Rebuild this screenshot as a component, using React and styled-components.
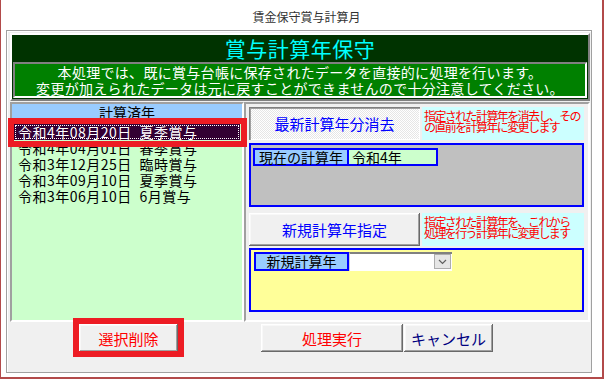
import React from "react";
import styled, { createGlobalStyle, css } from "styled-components";

const GlobalStyle = createGlobalStyle`
  html, body { margin: 0; padding: 0; background: #fff; }
  body { font-family: "Noto Sans CJK JP", "Noto Sans", sans-serif; }
  * { box-sizing: border-box; }
`;

const Window = styled.div`
  width: 604px;
  height: 379px;
  border-left: 1px solid #b24a4a;
  border-right: 2px solid #b24a4a;
  border-bottom: 2px solid #b24a4a;
  background: #fff;
  display: flex;
  flex-direction: column;
`;

const TitleBar = styled.div`
  height: 30px;
  padding: 3px 0 0 10px;
  display: flex;
  align-items: center;
  justify-content: center;
  font-size: 12px;
  color: #333;
`;

const Frame = styled.div`
  margin: 0 10px 4px 5px;
  height: 343px;
  border: 1px solid #a0a0a0;
  box-shadow: inset 1px 1px #fff;
  background: #f0f0f0;
  padding: 2px 1px 0 3px;
  display: flex;
  flex-direction: column;
`;

const Header = styled.div`
  border: 2px solid;
  border-color: #fff #808080 #808080 #fff;
  background: #003300;
  display: flex;
  flex-direction: column;
`;

const HeaderTitle = styled.div`
  height: 27px;
  line-height: 27px;
  text-align: center;
  color: #00ffff;
  font-size: 21px;
  letter-spacing: 0.5px;
`;

const Warning = styled.div`
  margin: 0 1px 1px 1px;
  height: 36px;
  border: 2px solid;
  border-color: #808080 #fff #fff #808080;
  background: #008000;
  color: #fff;
  font-size: 14px;
  line-height: 16px;
  letter-spacing: 0.3px;
  text-align: center;
  white-space: nowrap;
`;

const Body = styled.div`
  margin-top: 1px;
  height: 220px;
  display: grid;
  grid-template-columns: 234px 1fr;
`;

const Sunken = css`
  border: 2px solid;
  border-color: #a0a0a0 #fff #fff #a0a0a0;
`;

const LeftPanel = styled.div`
  ${Sunken};
  background: #ccffcc;
  display: flex;
  flex-direction: column;
`;

const ListHeader = styled.div`
  height: 16px;
  line-height: 16px;
  background: #99ccff;
  text-align: center;
  font-size: 14px;
  color: #000;
`;

const List = styled.div`
  padding: 4px 0 0 0;
  display: flex;
  flex-direction: column;
`;

const Row = styled.div`
  height: 16px;
  line-height: 16px;
  margin: 0 2px 0 2px;
  padding-left: 4px;
  font-size: 14px;
  letter-spacing: 0.5px;
  color: #000;
  word-spacing: 4px;
  white-space: nowrap;
  ${(p) =>
    p.$selected &&
    css`
      position: relative;
      background: #330033;
      color: #fff;
      outline: 1px dotted #fff;
      outline-offset: -2px;
      &::after {
        content: "";
        position: absolute;
        top: -6px;
        left: -6px;
        right: -7px;
        bottom: -7px;
        border: 6px solid #ed1c24;
        pointer-events: none;
      }
    `}
`;

const RightPanel = styled.div`
  ${Sunken};
  background: #f0f0f0;
  padding: 3px 4px 0 3px;
  display: flex;
  flex-direction: column;
`;

const ActionRow = styled.div`
  display: flex;
  gap: 2px;
  height: 33px;
  margin-top: ${(p) => p.$top || 0}px;
`;

const raised = css`
  background: #f0f0f0;
  box-shadow: inset -1px -1px #696969, inset 1px 1px #fff,
    inset -2px -2px #a0a0a0, inset 2px 2px #f8f8f8;
`;

const pressed = css`
  background: repeating-conic-gradient(#ffffff 0 25%, #e6e6e6 0 50%) 0 0 / 2px 2px;
  box-shadow: inset 1px 1px #808080, inset 2px 2px #a0a0a0,
    inset -1px -1px #fff;
`;

const BigButton = styled.div`
  width: 171px;
  height: 33px;
  display: flex;
  align-items: center;
  justify-content: center;
  font-size: 15px;
  color: #0000ff;
  ${(p) => (p.$pressed ? pressed : raised)};
`;

const Note = styled.div`
  flex: 1;
  height: 33px;
  overflow: hidden;
  background: #ccffff;
  color: #ff0000;
  font-size: 12px;
  line-height: 11px;
  letter-spacing: -1.6px;
  padding: 3px 0 0 2px;
  white-space: nowrap;
`;

const InfoBox = styled.div`
  margin-top: ${(p) => p.$top}px;
  height: 64px;
  border: 2px solid #0000ff;
  background: ${(p) => p.$bg};
  padding: ${(p) => p.$pad};
  display: flex;
  align-items: flex-start;
`;

const FieldLabel = styled.div`
  width: ${(p) => p.$w}px;
  height: ${(p) => p.$h}px;
  border: 2px solid #0000ff;
  background: #99ccff;
  font-size: 14px;
  line-height: ${(p) => p.$h - 4}px;
  text-align: center;
  color: #000;
`;

const FieldValue = styled.div`
  width: 89px;
  height: 18px;
  border: 2px solid #0000ff;
  border-left: none;
  background: #ccffcc;
  font-size: 14px;
  line-height: 14px;
  padding-left: 3px;
  color: #000;
`;

const Combo = styled.div`
  width: 103px;
  height: 19px;
  background: #fff;
  border-top: 2px solid #808080;
  border-left: 1px solid #d0d0d0;
  display: flex;
  justify-content: flex-end;
  padding: 0 1px 0 0;
`;

const ComboButton = styled.div`
  width: 17px;
  height: 15px;
  background: #e6e6e6;
  border: 1px solid #adadad;
  display: flex;
  align-items: center;
  justify-content: center;
`;

const Footer = styled.div`
  display: flex;
  padding: 2px 0 0 69px;
`;

const FootButton = styled.div`
  width: ${(p) => p.$w}px;
  height: 28px;
  margin-left: ${(p) => p.$ml || 0}px;
  display: flex;
  align-items: center;
  justify-content: center;
  font-size: 15px;
  color: ${(p) => p.$color};
  ${raised};
  ${(p) =>
    p.$marked &&
    css`
      position: relative;
      &::after {
        content: "";
        position: absolute;
        top: -6px;
        left: -6px;
        right: -6px;
        bottom: -5px;
        border: 6px solid #ed1c24;
        pointer-events: none;
      }
    `}
`;

const years = [
  "令和4年08月20日 夏季賞与",
  "令和4年04月01日 春季賞与",
  "令和3年12月25日 臨時賞与",
  "令和3年09月10日 夏季賞与",
  "令和3年06月10日 6月賞与",
];

export default function App() {
  return (
    <>
      <GlobalStyle />
      <Window>
        <TitleBar>賃金保守賞与計算月</TitleBar>
        <Frame>
          <Header>
            <HeaderTitle>賞与計算年保守</HeaderTitle>
            <Warning>
              本処理では、既に賞与台帳に保存されたデータを直接的に処理を行います。
              <br />
              変更が加えられたデータは元に戻すことができませんので十分注意してください。
            </Warning>
          </Header>
          <Body>
            <LeftPanel>
              <ListHeader>計算済年</ListHeader>
              <List>
                {years.map((y, i) => (
                  <Row key={y} $selected={i === 0}>
                    {y}
                  </Row>
                ))}
              </List>
            </LeftPanel>
            <RightPanel>
              <ActionRow>
                <BigButton $pressed>最新計算年分消去</BigButton>
                <Note>
                  指定された計算年を消去し、その
                  <br />
                  の直前を計算年に変更します
                </Note>
              </ActionRow>
              <InfoBox $top={3} $bg="#c0c0c0" $pad="3px 2px">
                <FieldLabel $w={96} $h={18}>現在の計算年</FieldLabel>
                <FieldValue>令和4年</FieldValue>
              </InfoBox>
              <ActionRow $top={6}>
                <BigButton>新規計算年指定</BigButton>
                <Note>
                  指定された計算年を、これから
                  <br />
                  処理を行う計算年に変更します
                  <br />。
                </Note>
              </ActionRow>
              <InfoBox $top={2} $bg="#ffff99" $pad="2px 3px">
                <FieldLabel $w={95} $h={19}>新規計算年</FieldLabel>
                <Combo>
                  <ComboButton>
                    <svg width="9" height="6" viewBox="0 0 9 6">
                      <path d="M1 1 L4.5 4.5 L8 1" fill="none" stroke="#606060" strokeWidth="1.2" />
                    </svg>
                  </ComboButton>
                </Combo>
              </InfoBox>
            </RightPanel>
          </Body>
          <Footer>
            <FootButton $w={99} $color="#ff0000" $marked>選択削除</FootButton>
            <FootButton $w={142} $ml={83} $color="#ff0000">処理実行</FootButton>
            <FootButton $w={89} $ml={1} $color="#000080">キャンセル</FootButton>
          </Footer>
        </Frame>
      </Window>
    </>
  );
}
